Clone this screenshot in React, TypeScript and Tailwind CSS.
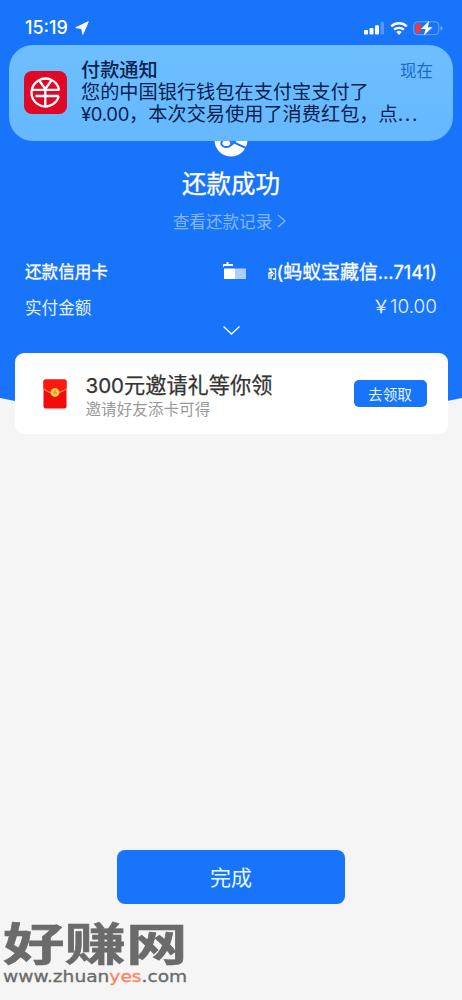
import React from "react";

function StatusBar() {
  return (
    <div className="flex h-[45px] items-start pl-[25px] pr-[18px] pt-[17px]">
      <span className="w-[45px] whitespace-nowrap font-[Inter] text-[18px] leading-[22px] font-medium">15:19</span>
      <svg className="ml-[5px] mt-[4px] h-[14px] w-[14px]" viewBox="0 0 14 14" fill="white">
        <path d="M13.3.7 7.8 13.3 6.7 7.3.8 6.7z" stroke="white" strokeWidth="1" strokeLinejoin="round" />
      </svg>
      <div className="ml-auto flex items-center pt-[3px]">
        <svg className="h-[14px] w-[20px]" viewBox="0 0 20 14" fill="white">
          <rect x="0" y="9" width="4" height="4.5" rx="1" />
          <rect x="5.5" y="7" width="4" height="6.5" rx="1" />
          <rect x="11" y="4.2" width="4" height="9.3" rx="1" />
          <rect x="16.5" y="1" width="3.5" height="12.5" rx="1" opacity=".25" />
        </svg>
        <svg className="ml-[6px] h-[15px] w-[18px]" viewBox="0 0 18 15" fill="none" stroke="white">
          <path d="M1.2 5.4a11.4 11.4 0 0 1 15.6 0" strokeWidth="2.4" />
          <path d="M4.1 8.7a7.2 7.2 0 0 1 9.8 0" strokeWidth="2.3" />
          <path d="M6.3 11.1a4 4 0 0 1 5.4 0L9 14z" fill="white" stroke="none" />
        </svg>
        <svg className="ml-[4px] h-[16px] w-[32px]" viewBox="0 0 32 16" fill="none">
          <rect x="1.8" y="1.8" width="25" height="12.8" rx="3.6" stroke="white" strokeOpacity=".36" />
          <path d="M28.5 5.8q2 .8 2 2.4t-2 2.4z" fill="white" fillOpacity=".4" />
          <rect x="3.5" y="3.5" width="5.2" height="9.4" rx="1.5" fill="#f9373d" />
          <path d="M17.2.8 9 9h4.6l-1.8 6.5L20.6 7.2h-4.7z" fill="white" />
        </svg>
      </div>
    </div>
  );
}

function PayLogo() {
  return (
    <svg className="h-[34px] w-[34px]" viewBox="0 0 34 34" fill="none">
      <circle cx="17" cy="17" r="16.5" fill="white" />
      <g stroke="#1874fb" strokeWidth="2">
        <ellipse cx="12.3" cy="20.3" rx="5" ry="3.8" />
        <path d="M16 17.5c5 1.8 9 5.2 16.5 7.5M16.5 22.5Q22 19 24 12" />
      </g>
    </svg>
  );
}

function WalletIcon() {
  return (
    <svg className="h-[43px] w-[43px] shrink-0" viewBox="0 0 43 43" fill="none">
      <rect width="43" height="43" rx="8" fill="#df0826" />
      <g stroke="white" strokeWidth="2.3">
        <path d="M34.8 25.3a13.9 13.9 0 1 1 .3-6.3" />
        <path d="M15.2 9.5 21.3 18l6.1-8.5M7.5 18.8h28M11.5 25h23.3M21.3 18.8v16.5" />
      </g>
    </svg>
  );
}

function Notification() {
  return (
    <section className="absolute left-[9px] top-[45px] z-10 flex h-[96px] w-[444px] rounded-[24px] bg-linear-to-b from-[#6dbfff] to-[#66b8ff] pl-[15px] text-[#071f4d]">
      <div className="pt-[26px]"><WalletIcon /></div>
      <div className="ml-[14px] flex-1 pt-[12px]">
        <div className="flex items-start justify-between pr-[20px]">
          <h2 className="text-[19.2px] leading-[24px] font-medium">付款通知</h2>
          <span className="pt-[2px] text-[16.5px] leading-[22px] text-[#1d68cf]">现在</span>
        </div>
        <p className="-mt-px whitespace-nowrap text-[19.2px] leading-[22px]">
          您的中国银行钱包在支付宝支付了<br />
          <span className="font-[Inter] text-[18.5px] tracking-[-0.3px]">¥0.00</span>，本次交易使用了消费红包，点<span className="font-[Inter] tracking-[1.6px]">...</span>
        </p>
      </div>
    </section>
  );
}

function GiftCard() {
  return (
    <section className="relative mx-auto -mt-[69px] flex h-[81px] w-[433px] items-center rounded-[9px] bg-white pl-[28px] pr-[21px]">
      <svg className="h-[30px] w-[24px]" viewBox="0 0 24 30" fill="none">
        <rect x=".5" y=".5" width="23" height="29" rx="2" fill="#f50b09" />
        <path d="M.5 9.5Q12 20 23.5 9.5V2q0-1.5-1.5-1.5H2Q.5.5.5 2z" fill="#ff1710" />
        <path d="M1 10q10 8.5 22 0" stroke="#f88a3a" strokeWidth="1.2" />
        <circle cx="12" cy="13.5" r="4.4" fill="#ffd451" />
        <path d="m12 11 2.4 2.5L12 16l-2.4-2.5z" fill="#e89b35" />
      </svg>
      <div className="ml-[19px] whitespace-nowrap pt-[2px]">
        <h2 className="text-[21.2px] leading-[25px] text-[#333] [-webkit-text-stroke:0.25px_#333]"><span className="font-[Inter] text-[20.5px]">300</span>元邀请礼等你领</h2>
        <p className="text-[15.6px] leading-[21px] text-[#999]">邀请好友添卡可得</p>
      </div>
      <button className="ml-auto h-[27px] w-[73px] rounded-[5px] bg-[#1874fb] text-[14.6px] leading-[26px] text-[#e5f5ff]">去领取</button>
    </section>
  );
}

function Watermark() {
  return (
    <div className="absolute left-[3px] top-[919px] w-[190px] whitespace-nowrap text-[#6b6b6b]">
      <div className="h-[50px] origin-top-left scale-y-[0.73] text-[61.5px] leading-[64px] font-bold [-webkit-text-stroke:0.8px_#6b6b6b]">好赚网</div>
      <div className="origin-left scale-x-[1.2] font-['DejaVu_Sans'] text-[15.5px] leading-[16px] [-webkit-text-stroke:0.3px]">www.zhuan<span className="text-[#ff8262]">yes</span>.com</div>
    </div>
  );
}

export default function App() {
  return (
    <main className="relative h-[1000px] w-[462px] overflow-hidden bg-[#f5f5f5] font-['Noto_Sans_CJK_SC','Liberation_Sans',sans-serif]">
      <header className="h-[422px] bg-[#1874fb] text-white [clip-path:circle(1120px_at_50%_-698px)]">
        <StatusBar />
        <div className="flex flex-col items-center pt-[78px]">
          <div className="h-[34px]"><PayLogo /></div>
          <h1 className="mt-[8px] text-[24.5px] leading-[35px] [-webkit-text-stroke:0.35px_white]">还款成功</h1>
          <a className="mr-[3px] mt-[9px] flex items-center text-[16.6px] leading-[24px] text-[#83b8ff]">
            查看还款记录
            <svg className="ml-[5px] h-[14px] w-[9px]" viewBox="0 0 9 14" fill="none" stroke="currentColor" strokeWidth="1.3"><path d="m1 1 7 6-7 6" /></svg>
          </a>
        </div>
        <dl className="px-[25px] pt-[26px]">
          <div className="flex h-[24px] items-center justify-between text-[16.6px] [-webkit-text-stroke:0.3px_white]">
            <dt>还款信用卡</dt>
            <dd className="flex items-center whitespace-nowrap">
              <svg className="mr-[19px] h-[20px] w-[26px]" viewBox="0 0 26 20" fill="white">
                <path d="M0 3h3.5V1h2v2H10v2H1v1H0zM1 7.5h11V18H1z" /><path d="M12 7.5h11V18H12z" opacity=".65" />
              </svg>
              <svg className="mt-[5px] h-[12px] w-[9px]" viewBox="0 0 9 12" fill="none" stroke="white" strokeWidth="1.3"><path d="M1 1h2v4H1v6M4.5 1h3v10H5M1 1l5 5M3 11V7h2" /></svg>
              <span className="text-[18.9px] leading-[22px]"><span className="font-[Inter] text-[18.5px]">(</span>蚂蚁宝藏信<span className="font-[Inter] text-[18.4px]">...7141)</span></span>
            </dd>
          </div>
          <div className="mt-[12px] flex h-[24px] items-center justify-between text-[16.6px] text-[#e4f2ff]">
            <dt>实付金额</dt><dd className="text-[18px]">￥<span className="font-[Inter] font-light text-[19px]">10.00</span></dd>
          </div>
        </dl>
        <svg className="mx-auto mt-[7px] h-[9px] w-[17px]" viewBox="0 0 17 9" fill="none" stroke="white" strokeWidth="1.3"><path d="m.5.5 8 7.5 8-7.5" /></svg>
      </header>
      <Notification />
      <GiftCard />
      <button className="mx-auto mt-[416px] block h-[54px] w-[228px] rounded-[8px] bg-[#1874fb] pb-[2px] text-[21px] leading-[52px] text-[#e5f8ff]">完成</button>
      <Watermark />
    </main>
  );
}
